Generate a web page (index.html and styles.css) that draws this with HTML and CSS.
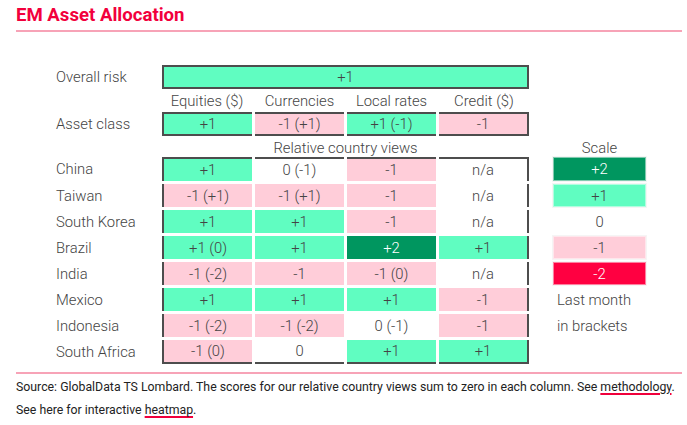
FILE: index.html
```html
<!DOCTYPE html>
<html>
<head>
<meta charset="utf-8">
<link rel="stylesheet" href="styles.css">
</head>
<body>
<div class="page">
  <h1 class="title">EM Asset Allocation</h1>
  <div class="table">
    <div class="row r-overall">
      <div class="label">Overall risk</div>
      <div class="cell g box span4">+1</div>
    </div>
    <div class="row r-head">
      <div class="label"></div>
      <div class="hcell">Equities ($)</div>
      <div class="hcell">Currencies</div>
      <div class="hcell">Local rates</div>
      <div class="hcell">Credit ($)</div>
    </div>
    <div class="row r-asset">
      <div class="label">Asset class</div>
      <div class="cell g tb bl">+1</div>
      <div class="cell p tb">-1 (+1)</div>
      <div class="cell g tb">+1 (-1)</div>
      <div class="cell p tb br">-1</div>
    </div>
    <div class="row r-rel">
      <div class="label"></div>
      <div class="hcell span4">Relative country views</div>
      <div class="spacer"></div>
      <div class="hcell">Scale</div>
    </div>
    <div class="row r-first">
      <div class="label">China</div>
      <div class="cell g bt bl">+1</div>
      <div class="cell bt">0 (-1)</div>
      <div class="cell p bt">-1</div>
      <div class="cell bt br">n/a</div>
      <div class="spacer"></div>
      <div class="scell dg">+2</div>
    </div>
    <div class="row">
      <div class="label">Taiwan</div>
      <div class="cell p bl">-1 (+1)</div>
      <div class="cell p">-1 (+1)</div>
      <div class="cell p">-1</div>
      <div class="cell br">n/a</div>
      <div class="spacer"></div>
      <div class="scell g">+1</div>
    </div>
    <div class="row">
      <div class="label">South Korea</div>
      <div class="cell g bl">+1</div>
      <div class="cell g">+1</div>
      <div class="cell p">-1</div>
      <div class="cell br">n/a</div>
      <div class="spacer"></div>
      <div class="scell plain">0</div>
    </div>
    <div class="row">
      <div class="label">Brazil</div>
      <div class="cell g bl">+1 (0)</div>
      <div class="cell g">+1</div>
      <div class="cell dg">+2</div>
      <div class="cell g br">+1</div>
      <div class="spacer"></div>
      <div class="scell p">-1</div>
    </div>
    <div class="row">
      <div class="label">India</div>
      <div class="cell p bl">-1 (-2)</div>
      <div class="cell p">-1</div>
      <div class="cell p">-1 (0)</div>
      <div class="cell br">n/a</div>
      <div class="spacer"></div>
      <div class="scell red">-2</div>
    </div>
    <div class="row">
      <div class="label">Mexico</div>
      <div class="cell g bl">+1</div>
      <div class="cell g">+1</div>
      <div class="cell g">+1</div>
      <div class="cell p br">-1</div>
      <div class="spacer"></div>
      <div class="note">Last month</div>
    </div>
    <div class="row">
      <div class="label">Indonesia</div>
      <div class="cell p bl">-1 (-2)</div>
      <div class="cell p">-1 (-2)</div>
      <div class="cell">0 (-1)</div>
      <div class="cell p br">-1</div>
      <div class="spacer"></div>
      <div class="note">in brackets</div>
    </div>
    <div class="row r-last">
      <div class="label">South Africa</div>
      <div class="cell p bl bb">-1 (0)</div>
      <div class="cell bb">0</div>
      <div class="cell g bb">+1</div>
      <div class="cell g bb br">+1</div>
    </div>
  </div>
  <div class="footer">
    <p>Source: GlobalData TS Lombard. The scores for our relative country views sum to zero in each column. See <a class="link">methodology</a>.</p>
    <p>See here for interactive <a class="link">heatmap</a>.</p>
  </div>
</div>
</body>
</html>
```

FILE: styles.css
```css
html, body {
  margin: 0;
  padding: 0;
  background: #ffffff;
}
body {
  font-family: Roboto, "Noto Sans", Arial, sans-serif;
  color: #3d3d3d;
}
.page {
  width: 666px;
  margin-left: 16px;
}
.title {
  margin: 0;
  padding-top: 4px;
  padding-bottom: 4px;
  font-size: 18.6px;
  line-height: 22px;
  font-weight: 700;
  color: #f2003c;
  border-bottom: 2px solid #f7a3b7;
}
.table {
  margin-top: 33px;
  display: flex;
  flex-direction: column;
  row-gap: 3px;
}
.row {
  display: grid;
  grid-template-columns: 143px 90px 89px 89px 90px 18px 93px;
  column-gap: 3px;
  height: 23px;
  font-size: 14.8px;
  font-weight: 300;
}
.r-overall { height: 24px; }
.r-head { height: 17px; }
.r-asset { height: 24px; }
.r-rel { height: 15px; }
.r-first { height: 24px; }
.r-last { height: 24px; }
.label {
  padding-left: 40px;
  display: flex;
  align-items: center;
  white-space: nowrap;
  color: #444;
}
.cell, .hcell, .scell {
  box-sizing: border-box;
  display: flex;
  align-items: center;
  justify-content: center;
  white-space: nowrap;
  color: #444;
}
.span4 { grid-column: span 4; }
.g { background: #60fdc1; }
.p { background: #ffcdd9; }
.dg { background: #00965f; color: #ffffff; }
.red { background: #ff0041; color: #ffffff; }
.box { border: 2px solid #4d4d4d; }
.tb { border-top: 2px solid #4d4d4d; border-bottom: 2px solid #4d4d4d; }
.bt { border-top: 2px solid #4d4d4d; }
.bb { border-bottom: 2px solid #4d4d4d; }
.bl { border-left: 2px solid #4d4d4d; }
.br { border-right: 2px solid #4d4d4d; }
.scell {
  border: 1px solid rgba(255, 255, 255, 0.5);
  box-shadow: 0 0 0 1px rgba(0, 0, 0, 0.04);
}
.scell.plain { box-shadow: none; }
.note {
  display: flex;
  align-items: center;
  padding-left: 4px;
  white-space: nowrap;
  color: #444;
}
.footer {
  margin-top: 8px;
  border-top: 2px solid #f7a3b7;
  padding-top: 2px;
  font-size: 12.3px;
  line-height: 23px;
  color: #222;
}
.footer p {
  margin: 0;
  white-space: nowrap;
}
.link {
  color: #222;
  text-decoration: underline;
  text-decoration-color: #f0003c;
  text-decoration-thickness: 1.5px;
  text-underline-offset: 2px;
}
```
